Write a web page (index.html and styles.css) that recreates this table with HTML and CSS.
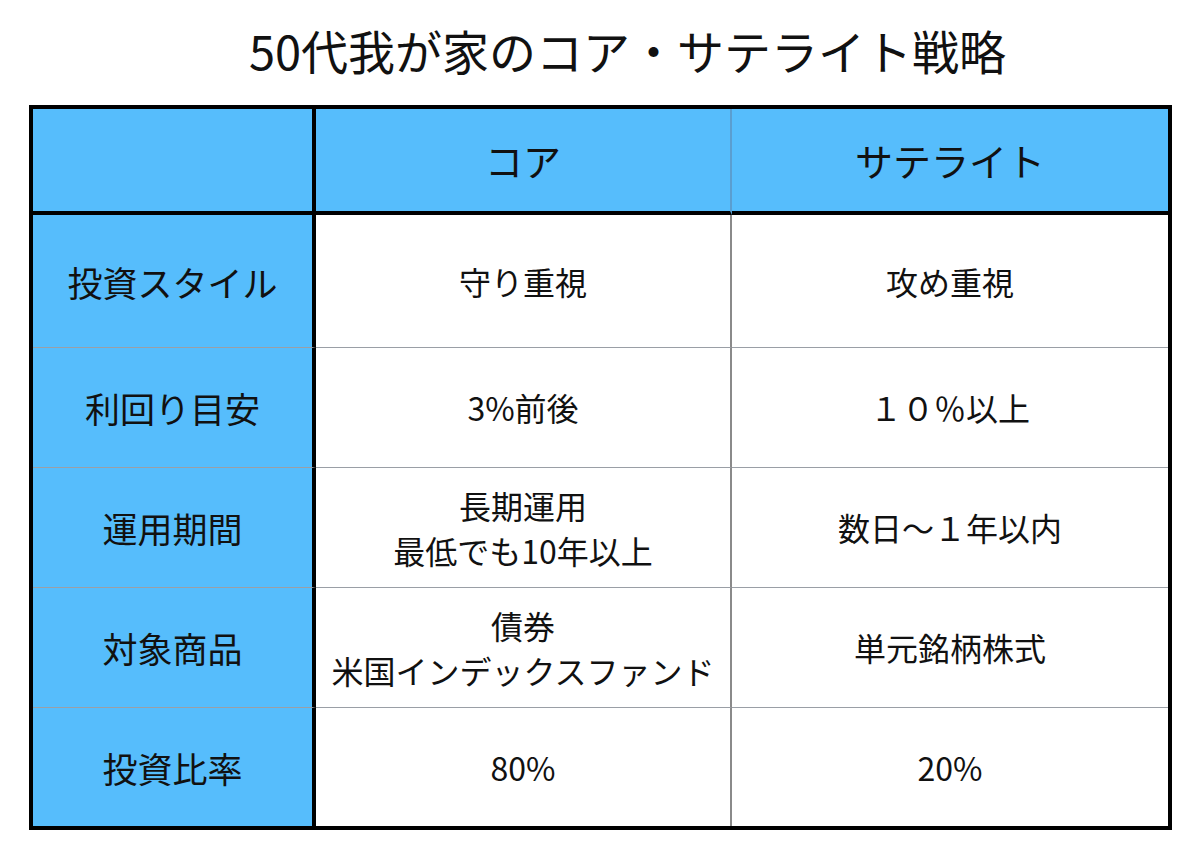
FILE: index.html
```html
<!DOCTYPE html>
<html lang="ja">
<head>
<meta charset="utf-8">
<link rel="stylesheet" href="styles.css">
</head>
<body>
<div class="page">
  <h1 class="title">50代我が家のコア・サテライト戦略</h1>
  <div class="table">
    <div class="cell head first"></div>
    <div class="cell head mid">コア</div>
    <div class="cell head last">サテライト</div>

    <div class="cell label r1">投資スタイル</div>
    <div class="cell body mid r1">守り重視</div>
    <div class="cell body last r1">攻め重視</div>

    <div class="cell label">利回り目安</div>
    <div class="cell body mid">3%前後</div>
    <div class="cell body last">１０％以上</div>

    <div class="cell label">運用期間</div>
    <div class="cell body mid">長期運用<br>最低でも10年以上</div>
    <div class="cell body last">数日〜１年以内</div>

    <div class="cell label">対象商品</div>
    <div class="cell body mid">債券<br>米国インデックスファンド</div>
    <div class="cell body last">単元銘柄株式</div>

    <div class="cell label end">投資比率</div>
    <div class="cell body mid end">80%</div>
    <div class="cell body last end">20%</div>
  </div>
</div>
</body>
</html>
```

FILE: styles.css
```css
html, body {
  margin: 0;
  padding: 0;
  background: #ffffff;
}
body {
  font-family: "Noto Sans CJK JP", "Noto Sans", sans-serif;
  color: #111111;
}
.page {
  width: 1200px;
  height: 854px;
  padding-left: 29px;
  box-sizing: border-box;
}
.title {
  margin: 0;
  height: 104.5px;
  display: flex;
  align-items: center;
  justify-content: center;
  width: 1143px;
  padding-left: 54px;
  padding-bottom: 6px;
  box-sizing: border-box;
  font-size: 47px;
  font-weight: 400;
  line-height: 1;
}
.table {
  width: 1143px;
  border: 4.5px solid #000;
  box-sizing: border-box;
  display: grid;
  grid-template-columns: 283px 416px 1fr;
  grid-template-rows: 106.5px 133px 120px 120px 120px 118px;
}
.cell {
  display: flex;
  align-items: center;
  justify-content: center;
  text-align: center;
  box-sizing: border-box;
  border-bottom: 1px solid #9a9fa6;
}
.head {
  background: #56bdfc;
  font-size: 38px;
  border-bottom: 4.5px solid #000;
}
.head.first {
  border-right: 4.5px solid #000;
}
.head.mid {
  border-right: 2px solid #5a9ed0;
}
.label {
  background: #56bdfc;
  font-size: 35px;
  border-right: 4.5px solid #000;
}
.body {
  background: #ffffff;
  font-size: 32px;
  line-height: 45px;
}
.body.mid {
  border-right: 2px solid #8a8a8a;
}
.end {
  border-bottom: none;
}
```
